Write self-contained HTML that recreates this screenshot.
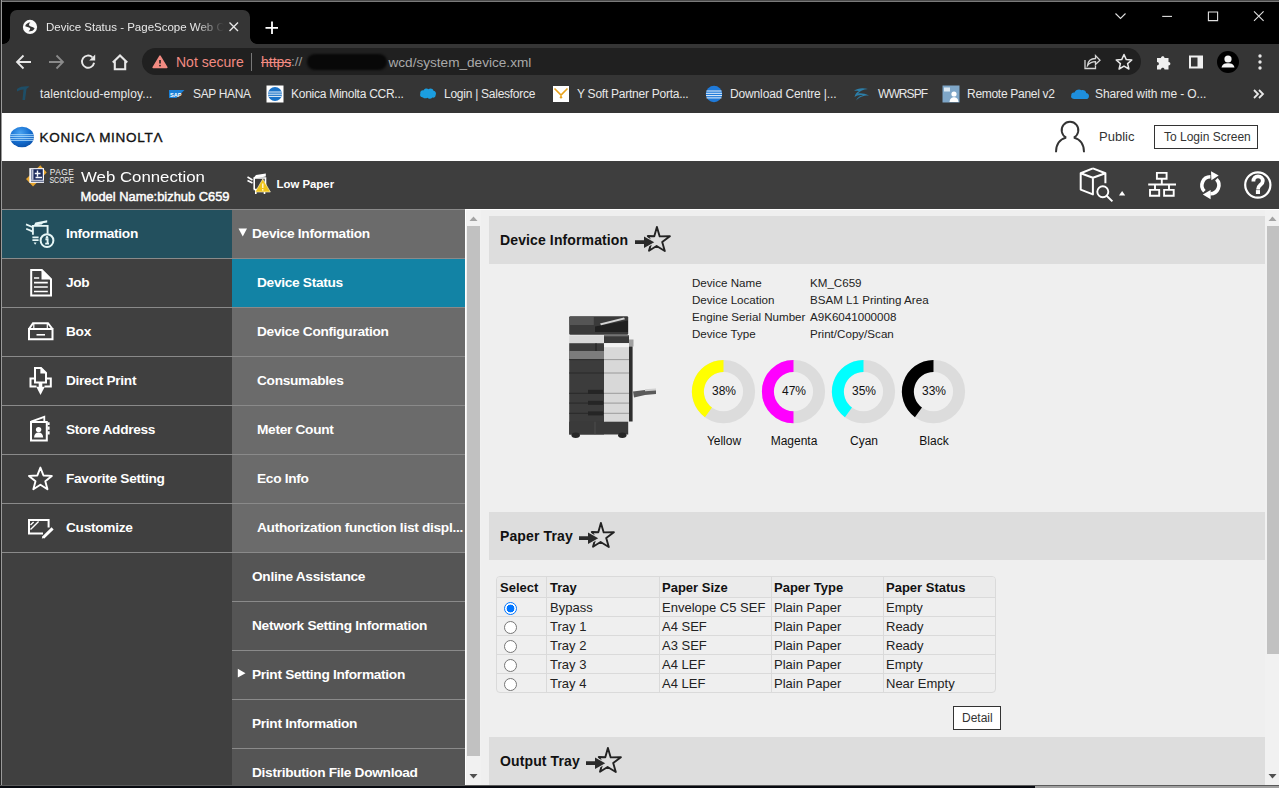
<!DOCTYPE html>
<html><head><meta charset="utf-8">
<style>
*{box-sizing:border-box;margin:0;padding:0}
html,body{width:1279px;height:788px;overflow:hidden;background:#000;font-family:"Liberation Sans",sans-serif;position:relative}
.a{position:absolute}
.t{position:absolute;white-space:nowrap}
/* chrome */
#topline{left:0;top:0;width:1279px;height:2px;background:linear-gradient(#4a4a4a 0 1px,#7a7a7a 1px 2px)}
#leftb{left:1px;top:0;width:1px;height:785px;background:#9a9a9a}
#leftb2{left:0;top:0;width:1px;height:785px;background:#262626}
#tab{left:10px;top:10px;width:240px;height:34px;background:#353535;border-radius:7px 7px 0 0}
#tab:before,#tab:after{content:"";position:absolute;bottom:0;width:7px;height:7px}
#tab:before{left:-7px;background:radial-gradient(circle at 0 0,transparent 6.5px,#353535 7.2px)}
#tab:after{right:-7px;background:radial-gradient(circle at 100% 0,transparent 6.5px,#353535 7.2px)}
#toolbar{left:1px;top:44px;width:1278px;height:69px;background:#353535}
#omni{left:142px;top:48px;width:999px;height:27px;background:#202020;border-radius:14px}
.ct{color:#e8e8e8;font-size:12px}
/* page */
#hdr{left:1px;top:113px;width:1278px;height:48px;background:#fff}
#bar{left:1px;top:161px;width:1278px;height:48px;background:#3e3e3e}
#nav{left:1px;top:209px;width:231px;height:576px;background:#404040}
#sub{left:232px;top:209px;width:233px;height:576px;background:#555}
.ni{position:absolute;left:0;width:231px;height:49px;border-top:1px solid #8a8a8a}
.ni .t{left:65px;top:15.6px;color:#fff;font-size:13.7px;letter-spacing:-0.3px;font-weight:bold}
.si{position:absolute;left:0;width:233px;height:49px;border-top:1px solid #8a8a8a;background:#6b6b6b}
.si .t{left:25px;top:15.6px;color:#fff;font-size:13.7px;letter-spacing:-0.3px;font-weight:bold}
.si.d{background:#555}
.si.d .t{left:20px}
#content{left:466px;top:209px;width:813px;height:576px;background:#efefef;border-top:1px solid #fff}
.sec{position:absolute;left:489px;width:776px;height:48px;background:#dddddd}
.sec .t{left:11px;top:16px;font-size:14px;font-weight:bold;color:#111;letter-spacing:0.12px}
.lbl{font-size:11.6px;color:#222}
.th{font-size:13px;font-weight:bold;color:#111}
.td{font-size:13px;color:#222}
.radio{width:13px;height:13px;border:1px solid #767676;border-radius:50%;background:#fff}
.radio.on{border:1px solid #0075ff;background:radial-gradient(circle,#0075ff 0 3.6px,#fff 4.2px)}
#bottom{left:0;top:785px;width:1279px;height:3px;background:linear-gradient(90deg,#080a10 0 1035px,#a0a0a0 1035px);border-top:1px solid #5a5a5a}
</style></head><body>
<div class="a" id="topline"></div>
<div class="a" id="tab"></div>
<div class="a" id="toolbar"></div>
<div class="a" id="omni"></div>
<div class="t ct" style="left:46px;top:21px;font-size:11.5px;width:180px;overflow:hidden;-webkit-mask-image:linear-gradient(90deg,#000 150px,transparent 178px)">Device Status - PageScope Web Connection</div>
<div class="t" style="left:176px;top:54px;font-size:14px;color:#f28b82">Not secure</div>
<div class="a" style="left:251px;top:53px;width:1px;height:18px;background:#777"></div>
<div class="t" style="left:261px;top:54px;font-size:14px;color:#f28b82;text-decoration:line-through">https</div>
<div class="t" style="left:291px;top:54px;font-size:13.6px;color:#9a9a9a">://</div>
<div class="a" style="left:307px;top:54px;width:80px;height:16px;background:#080808;border-radius:8px;filter:blur(1px)"></div>
<div class="t" style="left:388.5px;top:54.5px;font-size:13.6px;color:#a9a9a9">wcd/system_device.xml</div>

<!-- bookmarks -->
<div class="t ct" style="left:40px;top:87px;letter-spacing:0.13px">talentcloud-employ...</div>
<div class="t ct" style="left:193px;top:87px;letter-spacing:-0.35px">SAP HANA</div>
<div class="t ct" style="left:291px;top:87px;letter-spacing:-0.26px">Konica Minolta CCR...</div>
<div class="t ct" style="left:444px;top:87px;letter-spacing:-0.26px">Login | Salesforce</div>
<div class="t ct" style="left:577px;top:87px;letter-spacing:-0.25px">Y Soft Partner Porta...</div>
<div class="t ct" style="left:730px;top:87px;letter-spacing:-0.14px">Download Centre |...</div>
<div class="t ct" style="left:878px;top:87px;letter-spacing:-0.9px">WWRSPF</div>
<div class="t ct" style="left:967px;top:87px;letter-spacing:-0.29px">Remote Panel v2</div>
<div class="t ct" style="left:1095px;top:87px;letter-spacing:-0.10px">Shared with me - O...</div>

<!-- chrome icons -->
<svg class="a" style="left:18px;top:16px" width="24" height="22">
 <circle cx="12" cy="10.9" r="7.1" fill="#fafafa"/>
 <path d="M7.2 10.2 C7.6 8.2 9.5 6.6 12.4 6.2 C11.4 7.3 10.6 8.4 11.2 9.4 C12.2 10.6 14.6 10.6 16.6 12.2 C16 13.6 15 14.6 13.5 15 C12.6 15.2 11.6 15.3 10.6 15.6 C11.2 14.5 12.4 13.5 12.2 12.5 C11.8 11.2 9 10.8 7.2 10.2 Z" fill="#353535"/>
</svg>
<svg class="a" style="left:227px;top:20px" width="14" height="14"><path d="M2.5 2.5 L11 11 M11 2.5 L2.5 11" stroke="#e8e8e8" stroke-width="1.4"/></svg>
<svg class="a" style="left:264px;top:20px" width="16" height="16"><path d="M8 1.5 V14 M1.5 7.8 H14" stroke="#fff" stroke-width="1.8"/></svg>
<svg class="a" style="left:1110px;top:9px" width="170" height="16" fill="none" stroke="#e0e0e0" stroke-width="1.1">
 <path d="M5.5 4.5 L10.5 9.5 L15.5 4.5"/>
 <path d="M52.2 7.4 H62"/>
 <path d="M98.4 3 H107.6 V11.6 H98.4 Z"/>
 <path d="M144 2.4 L153.6 11.8 M153.6 2.4 L144 11.8"/>
</svg>
<svg class="a" style="left:12px;top:50px" width="130" height="24" fill="none" stroke="#e8e8e8" stroke-width="1.8">
 <path d="M19 12 H5.5 M11.5 5.5 L5 12 L11.5 18.5"/>
 <path d="M37 12 H50.5 M44.5 5.5 L51 12 L44.5 18.5" stroke="#8a8a8a"/>
 <path d="M80.3 7.2 A6.1 6.1 0 1 0 82.1 12.8" stroke-width="1.9"/>
 <path d="M83.2 4.6 V10.6 H77.2 Z" fill="#e8e8e8" stroke="none"/>
 <path d="M100.8 12.6 L108 5.4 L115.2 12.6 M102.8 11 V19.2 H113.2 V11" stroke-width="2.1"/>
</svg>
<svg class="a" style="left:148px;top:52px" width="22" height="20"><path d="M12 4.2 L18.8 15.4 H5.2 Z" fill="#f28b82" stroke="#f28b82" stroke-width="1.6" stroke-linejoin="round"/><path d="M12 8 V11.6" stroke="#202020" stroke-width="1.6"/><circle cx="12" cy="13.6" r="0.9" fill="#202020"/></svg>
<svg class="a" style="left:1080px;top:50px" width="190" height="24" fill="none" stroke="#d6d6d6" stroke-width="1.3">
 <path d="M5 10 V18.5 H15.5 V15.5"/>
 <path d="M7.5 15.5 C8 11 11 8.5 15.5 8.5 V5.5 L20 10.2 L15.5 14.5 V11.6 C12 11.6 9.6 12.8 7.5 15.5 Z"/>
 <path d="M44 4.5 L46.3 9.6 L51.8 10 L47.6 13.6 L48.9 19 L44 16.1 L39.1 19 L40.4 13.6 L36.2 10 L41.7 9.6 Z" stroke="#e8e8e8" stroke-width="1.5" stroke-linejoin="round"/>
</svg>
<svg class="a" style="left:1154px;top:52px" width="20" height="20"><path d="M3 6 H7 C7 3.5 10.5 3.5 10.5 6 H14.5 V10 C17 10 17 13.5 14.5 13.5 V17.5 H10.5 C10.5 15 7 15 7 17.5 H3 V13.5 C5.5 13.5 5.5 10 3 10 Z" fill="#f0f0f0"/></svg>
<svg class="a" style="left:1186px;top:52px" width="20" height="20"><path d="M3 3.5 H17 V16.5 H3 Z" fill="#f0f0f0"/><path d="M5 5.5 H11.5 V14.5 H5 Z" fill="#353535"/></svg>
<svg class="a" style="left:1216px;top:50px" width="24" height="24"><circle cx="12" cy="12" r="11" fill="#000"/><circle cx="12" cy="9" r="3.6" fill="#f4f4f4"/><path d="M5.5 17.5 C6.5 13.8 9 13.3 12 13.3 C15 13.3 17.5 13.8 18.5 17.5 Z" fill="#f4f4f4"/></svg>
<svg class="a" style="left:1254px;top:52px" width="12" height="20"><circle cx="6" cy="4" r="1.7" fill="#e8e8e8"/><circle cx="6" cy="10" r="1.7" fill="#e8e8e8"/><circle cx="6" cy="16" r="1.7" fill="#e8e8e8"/></svg>
<!-- bookmark icons -->
<svg class="a" style="left:14px;top:84px" width="20" height="18"><path d="M3 5 C6 2.5 11 2 15.5 2.5 L12.5 5 L11 16 H8.5 L9.5 5.5 C7.5 5.5 5 6.2 3 7.5 Z" fill="#1e4e67"/></svg>
<svg class="a" style="left:168.5px;top:89.5px" width="16" height="9"><path d="M0 0 H15.5 L7.5 8 H0 Z" fill="#1a7fd6"/><text x="1" y="6.6" font-size="5.6" font-weight="bold" fill="#fff" font-family="Liberation Sans">SAP</text></svg>
<svg class="a" style="left:266px;top:85px" width="18" height="18"><rect x="0.5" y="0.5" width="17" height="17" fill="#fff"/><circle cx="9" cy="9" r="7" fill="#1a73c8"/><path d="M2.5 7 H15.5 M2 9.2 H16 M2.5 11.4 H15.5" stroke="#fff" stroke-width="0.9"/></svg>
<svg class="a" style="left:419px;top:86px" width="18" height="14"><path d="M4 11.5 C1.5 11.5 0.5 9.5 1.3 7.8 C0.8 5.8 2.5 4 4.5 4.4 C5.5 2.5 8 2 9.5 3.3 C11 2 14 2.5 14.5 4.7 C16.8 5 17.6 7.5 16.6 9.2 C16.6 11 15 12 13.5 11.5 C12 13 9.5 13 8.5 11.8 C7 12.6 5 12.6 4 11.5 Z" fill="#1b9ee0"/></svg>
<svg class="a" style="left:552px;top:85px" width="18" height="18"><rect x="1" y="1" width="16" height="16" fill="#fff"/><path d="M2.5 3.5 L9 10 L15.5 3.5" stroke="#e8a21c" stroke-width="1.6" fill="none"/><circle cx="9" cy="12.3" r="1.2" fill="#e8a21c"/></svg>
<svg class="a" style="left:705px;top:85px" width="18" height="18"><circle cx="9" cy="9" r="8.2" fill="#1f7ad9"/><path d="M1.5 6 H16.5 M1 8.3 H17 M1 10.6 H17 M1.5 12.9 H16.5" stroke="#fff" stroke-width="0.9"/></svg>
<svg class="a" style="left:852px;top:85px" width="20" height="18"><path d="M2 6 C5 3 11 2.5 16 4 C11 4.5 8 6 6 8.5 C9 8 13 8.5 17 10.5 C13 10 7 12 4 15.5 C6 11.5 9 10.5 11 10.2 C8 9.5 4.5 10.5 2.5 12 C3 9 5 7 7 6.2 C5 5.5 3.5 5.8 2 6 Z" fill="#2c7ea8"/></svg>
<svg class="a" style="left:942px;top:85px" width="18" height="18"><rect x="0.5" y="0.5" width="17" height="17" fill="#7ea6c8"/><rect x="2" y="2.5" width="6" height="4" fill="#dce9f3"/><circle cx="12" cy="9" r="2.6" fill="#fff"/><path d="M7.5 17 C8 13 10 12.2 12 12.2 C14 12.2 16 13 16.5 17 Z" fill="#fff"/></svg>
<svg class="a" style="left:1070px;top:87px" width="20" height="13"><path d="M4 12 C1.5 12 0.5 10 1.3 8.3 C1 6.5 2.8 5.2 4.5 5.6 C5.5 2.8 9 1.5 11.5 3.2 C13.5 2.5 16 3.8 16.2 6 C18.5 6.2 19.5 8.5 18.8 10.2 C18.3 11.5 17.3 12 16 12 Z" fill="#1e8fdd"/></svg>
<svg class="a" style="left:1252px;top:88px" width="14" height="12"><path d="M2 2 L6 6 L2 10 M7 2 L11 6 L7 10" stroke="#e8e8e8" stroke-width="1.8" fill="none"/></svg>

<!-- page header -->
<div class="a" id="hdr"></div>
<div class="a" id="bar"></div>
<svg class="a" style="left:8px;top:125px" width="30" height="24">
 <defs><radialGradient id="kmg" cx="0.42" cy="0.3" r="0.75"><stop offset="0" stop-color="#4aa3f0"/><stop offset="0.55" stop-color="#1570d2"/><stop offset="1" stop-color="#0a4fa8"/></radialGradient></defs>
 <ellipse cx="14" cy="12" rx="11.9" ry="10.3" fill="url(#kmg)"/>
 <path d="M2.3 9.7 H25.7 M2.1 11.6 H25.9 M2.2 13.6 H25.8 M2.8 15.4 H25.2" stroke="#b8e2ff" stroke-width="0.85"/>
</svg>
<div class="t" style="left:39.5px;top:129.8px;font-size:13.5px;letter-spacing:0.7px;color:#111;-webkit-text-stroke:0.35px #111">KONIC&#923; MINOLT&#923;</div>
<svg class="a" style="left:1050px;top:116px" width="40" height="40" fill="none" stroke="#333" stroke-width="1.9">
 <path d="M16.2 21.6 A8.35 8.35 0 1 1 23.8 21.6"/>
 <path d="M16.2 21.6 C10 23.2 6 28.5 6 36.2 M23.8 21.6 C30 23.2 34 28.5 34 36.2"/>
</svg>
<svg class="a" style="left:22px;top:162px" width="56" height="30">
 <path d="M18.3 3.2 L24.7 10.4 L11 24.5 L4 17 Z" fill="#e6a52e"/>
 <rect x="7.3" y="6.1" width="14.7" height="14.8" fill="#f4f6fb"/>
 <rect x="9.5" y="7.2" width="11.3" height="10.6" fill="#1b2a5c"/>
 <path d="M10.8 7.2 V17.8" stroke="#f4f6fb" stroke-width="1.1"/>
 <path d="M15.5 8.5 V14.5 M12.8 11.5 H18.5 M13.5 15.5 H20" stroke="#f4f6fb" stroke-width="1.4"/>
 <path d="M9 19.2 H21.8" stroke="#1b2a5c" stroke-width="0.9"/>
 <text x="27.8" y="12.9" font-family="Liberation Sans" font-size="8.4" textLength="24" lengthAdjust="spacing" fill="#f0f0f0">PAGE</text>
 <text x="27.4" y="20.6" font-family="Liberation Sans" font-size="8.4" textLength="24.6" lengthAdjust="spacingAndGlyphs" fill="#f0f0f0">SCOPE</text>
</svg>
<svg class="a" style="left:240px;top:168px" width="36" height="30">
 <path d="M7.5 9 L12.5 12 M7.5 12.5 L12.5 15" stroke="#fff" stroke-width="1.6"/>
 <path d="M14.2 21 V10 H25.5 V21" stroke="#fff" stroke-width="1.6" fill="none"/>
 <path d="M14 9.5 L16 7 L25.8 5.5 V8.5 L14 10.5 Z" fill="#fff"/>
 <path d="M13.6 21.5 H26 M15.8 21.5 V26 M24.5 21.5 V26" stroke="#fff" stroke-width="1.6"/>
 <path d="M22.8 11 L30.4 24 H15.2 Z" fill="#f0c419" stroke="#fff8d8" stroke-width="0.6"/>
 <path d="M22.8 15.5 V20" stroke="#fffbe6" stroke-width="1.3"/><circle cx="22.8" cy="21.9" r="0.8" fill="#fffbe6"/>
</svg>
<svg class="a" style="left:1070px;top:160px" width="209" height="48" fill="none" stroke="#fff" stroke-width="1.9" stroke-linejoin="round">
 <path d="M22.9 8.4 L35.4 13.3 V23.2 M22.9 8.4 L10.7 13.3 V29.6 L22.9 34.4 V17.8 M10.7 13.3 L22.9 17.8 L35.4 13.3" stroke-width="2"/>
 <circle cx="32.8" cy="31.7" r="5.6" stroke="#3e3e3e" stroke-width="4" fill="#3e3e3e"/>
 <circle cx="32.8" cy="31.7" r="5.5" stroke-width="1.9"/>
 <path d="M36.6 35.7 L42.4 41.4" stroke-width="2"/>
 <path d="M49 35.6 H55.2 L52.1 31 Z" fill="#fff" stroke="none"/>
 <path d="M86.9 12.9 H96.6 V18.7 H86.9 Z M91.8 18.7 V24.5 M78.2 24.5 H106 M85 24.5 V29.9 M99 24.5 V29.9 M80 29.9 H89.2 V35.7 H80 Z M94.1 29.9 H103.7 V35.7 H94.1 Z" stroke-width="1.9" stroke-linejoin="miter"/>
 <path d="M140.4 16.8 A8.5 8.5 0 0 0 134.4 31.3" stroke-width="3.6" stroke-linejoin="miter"/>
 <path d="M146.4 19.3 A8.5 8.5 0 0 1 140.4 33.8" stroke-width="3.6"/>
 <path d="M141 11.3 L148.7 15.5 L141.4 20.2 Z" fill="#fff" stroke="none"/>
 <path d="M132.8 34.6 L140.6 29.9 L140.6 39.2 Z" fill="#fff" stroke="none"/>
 <circle cx="187.8" cy="25" r="12.6" stroke-width="2.2"/>
 <path d="M183.4 21.5 C183.4 18 185.5 16.4 188 16.4 C191 16.4 192.8 18.4 192.8 21 C192.8 23.5 191 24.5 189.8 25.5 C188.6 26.4 188 27 188 29.6" stroke-width="3.8" stroke-linejoin="miter" stroke-linecap="butt"/>
 <rect x="185.9" y="30.1" width="4.1" height="3.9" fill="#fff" stroke="none"/>
</svg>

<div class="t" style="left:1099px;top:129px;font-size:13px;color:#333">Public</div>
<div class="a" style="left:1154px;top:125px;width:104px;height:24px;border:1px solid #333"></div>
<div class="t" style="left:1164px;top:130px;font-size:12px;color:#333">To Login Screen</div>
<div class="t" style="left:80.5px;top:168.4px;font-size:15px;color:#fff;transform:scaleX(1.12);transform-origin:0 0">Web Connection</div>
<div class="t" style="left:80.5px;top:189.3px;font-size:12.9px;color:#fff;-webkit-text-stroke:0.45px #fff">Model Name:bizhub C659</div>
<div class="t" style="left:276.5px;top:177.5px;font-size:11.4px;font-weight:bold;color:#fff">Low Paper</div>

<!-- nav -->
<div class="a" id="nav">
 <div class="ni" style="top:0;background:#23505e"><div class="t">Information</div></div>
 <div class="ni" style="top:49px"><div class="t">Job</div></div>
 <div class="ni" style="top:98px"><div class="t">Box</div></div>
 <div class="ni" style="top:147px"><div class="t">Direct Print</div></div>
 <div class="ni" style="top:196px"><div class="t">Store Address</div></div>
 <div class="ni" style="top:245px"><div class="t">Favorite Setting</div></div>
 <div class="ni" style="top:294px"><div class="t">Customize</div></div>
 <div class="ni" style="top:343px"></div>
</div>
<div class="a" id="sub">
 <div class="si" style="top:0"><div class="t" style="left:20px">Device Information</div></div>
 <div class="si" style="top:49px;background:#1283a5"><div class="t">Device Status</div></div>
 <div class="si" style="top:98px"><div class="t">Device Configuration</div></div>
 <div class="si" style="top:147px"><div class="t">Consumables</div></div>
 <div class="si" style="top:196px"><div class="t">Meter Count</div></div>
 <div class="si" style="top:245px"><div class="t">Eco Info</div></div>
 <div class="si" style="top:294px"><div class="t">Authorization function list displ...</div></div>
 <div class="si d" style="top:343px"><div class="t">Online Assistance</div></div>
 <div class="si d" style="top:392px"><div class="t">Network Setting Information</div></div>
 <div class="si d" style="top:441px"><div class="t">Print Setting Information</div></div>
 <div class="si d" style="top:490px"><div class="t">Print Information</div></div>
 <div class="si d" style="top:539px"><div class="t">Distribution File Download</div></div>
</div>


<!-- nav icons -->
<svg class="a" style="left:20px;top:214px" width="40" height="40" fill="none" stroke="#e6f6f6" stroke-width="1.9">
 <path d="M6 10.4 L12.3 13 M6.2 14.8 L12.3 17.4" stroke-width="1.7"/>
 <path d="M12.9 20.8 V11.9 H27.6 V19.8"/>
 <path d="M13.8 11.4 L15.4 8.4 L27.2 6.2 V8.6 L23 9.2 L21.8 10.6 Z" fill="#e6f6f6" stroke="none"/>
 <path d="M12.4 23.4 H18.6 M12.4 26.2 H18.6" stroke-width="1.7"/>
 <path d="M13.6 28.5 H16.6 L15.1 30.8 Z" fill="#e6f6f6" stroke="none"/>
 <circle cx="27" cy="26.6" r="6.4" stroke-width="2"/>
 <circle cx="27" cy="23.2" r="1.2" fill="#e6f6f6" stroke="none"/>
 <path d="M25.4 25.3 H27.6 V29.4 M25.2 29.6 H29" stroke-width="1.9"/>
</svg>
<svg class="a" style="left:20px;top:263px" width="40" height="40" fill="none" stroke="#fff" stroke-width="2">
 <path d="M11.2 7 H21.8 L31 16.2 V32.5 H11.2 Z"/>
 <path d="M21.5 6.5 V16.5 H31.5 Z" fill="#fff" stroke="none"/>
 <path d="M14 15 H19.2 M14 19.6 H27.8 M14 24 H27.8 M14 28.5 H27.8" stroke-width="1.7"/>
</svg>
<svg class="a" style="left:20px;top:312px" width="40" height="40" fill="none" stroke="#fff" stroke-width="2">
 <path d="M9 17 H32.5 V27.2 H9 Z"/>
 <path d="M9 17 L13 11.2 H28 L32.5 17"/>
 <path d="M13.8 11.5 V16 M27.3 11.5 V16" stroke-width="1.2"/>
 <path d="M16.5 22.8 H25" stroke-width="1.6"/>
</svg>
<svg class="a" style="left:20px;top:361px" width="40" height="40" fill="none" stroke="#fff" stroke-width="2">
 <path d="M15 21.5 V7 H21 L26 12 V21.5 Z"/>
 <path d="M20.4 6 V12.6 H27 Z" fill="#fff" stroke="none"/>
 <path d="M15 17.5 H10.5 V25.5 H16.5 M24.5 25.5 H30.8 V17.5 H25.8"/>
 <path d="M16.3 25.8 H24.8 L20.5 34 Z" fill="#fff" stroke="none"/>
 <path d="M20.5 22 V27" stroke-width="3.6"/>
</svg>
<svg class="a" style="left:20px;top:410px" width="40" height="40" fill="none" stroke="#fff" stroke-width="2">
 <path d="M11 12 H26.8 V30.6 H11 Z"/>
 <path d="M11 11.6 L24.3 6.8 V11.6" stroke-width="1.8"/>
 <path d="M27.5 12.3 H29.6 V15 H27.5 Z M27.5 16.5 H29.6 V19.8 H27.5 Z M27.5 21.3 H29.6 V24.6 H27.5 Z" fill="#fff" stroke="none"/>
 <circle cx="18.6" cy="19.6" r="2.7" fill="#fff" stroke="none"/>
 <path d="M14 27.6 Q14.5 22.5 18.6 22.5 Q22.7 22.5 23.2 27.6 Z" fill="#fff" stroke="none"/>
</svg>
<svg class="a" style="left:20px;top:459px" width="40" height="40" fill="none" stroke="#fff" stroke-width="1.9" stroke-linejoin="round">
 <path d="M20.40 8.60 L23.43 16.43 L31.81 16.89 L25.31 22.19 L27.45 30.31 L20.40 25.76 L13.35 30.31 L15.49 22.19 L8.99 16.89 L17.37 16.43 Z"/>
</svg>
<svg class="a" style="left:20px;top:508px" width="40" height="40" fill="none" stroke="#fff" stroke-width="2">
 <path d="M28.6 19.5 V12 H9 V25.6 H23"/>
 <path d="M10.5 17 L13.6 14 M10.5 21.6 L18.6 13.6" stroke-width="1.4"/>
 <path d="M23.3 29.5 L32.6 20.4" stroke-width="3" stroke-linecap="butt"/>
 <path d="M21.8 30.6 L22.6 28 L24.8 30.1 Z" fill="#fff" stroke="none"/>
</svg>
<!-- sub nav triangles -->
<svg class="a" style="left:236.8px;top:227px" width="12" height="12"><path d="M1.5 1.5 H10 L5.75 9.5 Z" fill="#fff"/></svg>
<svg class="a" style="left:236px;top:667px" width="12" height="12"><path d="M1.8 1.8 V10.5 L9.5 6.15 Z" fill="#fff"/></svg>

<!-- content -->
<div class="a" id="content"></div>
<div class="sec" style="top:216px"><div class="t">Device Information</div></div>
<div class="sec" style="top:512px"><div class="t">Paper Tray</div></div>
<div class="sec" style="top:737px"><div class="t">Output Tray</div></div>


<!-- device info -->
<div class="t lbl" style="left:692px;top:276px">Device Name</div>
<div class="t lbl" style="left:692px;top:293px">Device Location</div>
<div class="t lbl" style="left:692px;top:310px">Engine Serial Number</div>
<div class="t lbl" style="left:692px;top:327px">Device Type</div>
<div class="t lbl" style="left:810px;top:276px">KM_C659</div>
<div class="t lbl" style="left:810px;top:293px">BSAM L1 Printing Area</div>
<div class="t lbl" style="left:810px;top:310px">A9K6041000008</div>
<div class="t lbl" style="left:810px;top:327px">Print/Copy/Scan</div>
<svg class="a" style="left:680px;top:350px" width="300" height="110">
 <g fill="none" stroke-width="12">
  <circle cx="43.5" cy="41.6" r="25.6" stroke="#dcdcdc"/>
  <circle cx="113.5" cy="41.6" r="25.6" stroke="#dcdcdc"/>
  <circle cx="183.5" cy="41.6" r="25.6" stroke="#dcdcdc"/>
  <circle cx="253.5" cy="41.6" r="25.6" stroke="#dcdcdc"/>
  <path d="M43.5 16.00 A25.6 25.6 0 0 0 28.45 62.31" stroke="#ffff00"/>
  <path d="M113.5 16.00 A25.6 25.6 0 0 0 113.50 67.20" stroke="#ff00ff"/>
  <path d="M183.5 16.00 A25.6 25.6 0 0 0 168.45 62.31" stroke="#00ffff"/>
  <path d="M253.5 16.00 A25.6 25.6 0 0 0 238.45 62.31" stroke="#000000"/>
 </g>
</svg>
<div class="t" style="left:701px;top:384px;width:46px;text-align:center;font-size:12px;color:#111">38%</div>
<div class="t" style="left:771px;top:384px;width:46px;text-align:center;font-size:12px;color:#111">47%</div>
<div class="t" style="left:841px;top:384px;width:46px;text-align:center;font-size:12px;color:#111">35%</div>
<div class="t" style="left:911px;top:384px;width:46px;text-align:center;font-size:12px;color:#111">33%</div>
<div class="t" style="left:694px;top:434px;width:60px;text-align:center;font-size:12px;color:#111">Yellow</div>
<div class="t" style="left:764px;top:434px;width:60px;text-align:center;font-size:12px;color:#111">Magenta</div>
<div class="t" style="left:834px;top:434px;width:60px;text-align:center;font-size:12px;color:#111">Cyan</div>
<div class="t" style="left:904px;top:434px;width:60px;text-align:center;font-size:12px;color:#111">Black</div>

<!-- paper tray table -->
<div class="a" id="ptab" style="left:496px;top:576px;width:500px;height:117px;border:1px solid #dadada;border-radius:4px;overflow:hidden">
 <div class="a" style="left:0;top:0;width:498px;height:20px;background:#ebebeb"></div>
 <div class="a" style="left:0;top:20px;width:498px;height:1px;background:#dadada"></div>
 <div class="a" style="left:0;top:39px;width:498px;height:1px;background:#dadada"></div>
 <div class="a" style="left:0;top:58px;width:498px;height:1px;background:#dadada"></div>
 <div class="a" style="left:0;top:77px;width:498px;height:1px;background:#dadada"></div>
 <div class="a" style="left:0;top:96px;width:498px;height:1px;background:#dadada"></div>
 <div class="a" style="left:49px;top:0;width:1px;height:117px;background:#dadada"></div>
 <div class="a" style="left:162px;top:0;width:1px;height:117px;background:#dadada"></div>
 <div class="a" style="left:274px;top:0;width:1px;height:117px;background:#dadada"></div>
 <div class="a" style="left:386px;top:0;width:1px;height:117px;background:#dadada"></div>
</div>
<div class="t th" style="left:500px;top:580px">Select</div>
<div class="t th" style="left:550px;top:580px">Tray</div>
<div class="t th" style="left:662px;top:580px">Paper Size</div>
<div class="t th" style="left:774px;top:580px">Paper Type</div>
<div class="t th" style="left:886px;top:580px">Paper Status</div>
<div class="a radio on" style="left:504px;top:602px"></div>
<div class="t td" style="left:550px;top:600px">Bypass</div>
<div class="t td" style="left:662px;top:600px">Envelope C5 SEF</div>
<div class="t td" style="left:774px;top:600px">Plain Paper</div>
<div class="t td" style="left:886px;top:600px">Empty</div>
<div class="a radio" style="left:504px;top:621px"></div>
<div class="t td" style="left:550px;top:619px">Tray 1</div>
<div class="t td" style="left:662px;top:619px">A4 SEF</div>
<div class="t td" style="left:774px;top:619px">Plain Paper</div>
<div class="t td" style="left:886px;top:619px">Ready</div>
<div class="a radio" style="left:504px;top:640px"></div>
<div class="t td" style="left:550px;top:638px">Tray 2</div>
<div class="t td" style="left:662px;top:638px">A3 SEF</div>
<div class="t td" style="left:774px;top:638px">Plain Paper</div>
<div class="t td" style="left:886px;top:638px">Ready</div>
<div class="a radio" style="left:504px;top:659px"></div>
<div class="t td" style="left:550px;top:657px">Tray 3</div>
<div class="t td" style="left:662px;top:657px">A4 LEF</div>
<div class="t td" style="left:774px;top:657px">Plain Paper</div>
<div class="t td" style="left:886px;top:657px">Empty</div>
<div class="a radio" style="left:504px;top:678px"></div>
<div class="t td" style="left:550px;top:676px">Tray 4</div>
<div class="t td" style="left:662px;top:676px">A4 LEF</div>
<div class="t td" style="left:774px;top:676px">Plain Paper</div>
<div class="t td" style="left:886px;top:676px">Near Empty</div>

<div class="a" style="left:953px;top:706px;width:48px;height:24px;border:1px solid #333;background:#fff"></div>
<div class="t" style="left:962px;top:711px;font-size:12px;color:#333">Detail</div>

<svg class="a" style="left:630px;top:220px" width="46" height="36">
 <path d="M26.9 7 L29.7 16.4 L39.9 16.3 L32.2 22 L34.8 31 L26.6 26 L19 30.7 L21.4 22.3 L17.8 16 L24.3 16.2 Z" fill="none" stroke="#222" stroke-width="1.9" stroke-linejoin="round"/>
 <path d="M5 20.2 H14 V16.4 L24.2 22.2 L14 28 V24 H5 Z" fill="#2a2a2a" stroke="#dddddd" stroke-width="2" paint-order="stroke"/>
</svg>
<svg class="a" style="left:574px;top:516px" width="46" height="36">
 <path d="M26.9 7 L29.7 16.4 L39.9 16.3 L32.2 22 L34.8 31 L26.6 26 L19 30.7 L21.4 22.3 L17.8 16 L24.3 16.2 Z" fill="none" stroke="#222" stroke-width="1.9" stroke-linejoin="round"/>
 <path d="M5 20.2 H14 V16.4 L24.2 22.2 L14 28 V24 H5 Z" fill="#2a2a2a" stroke="#dddddd" stroke-width="2" paint-order="stroke"/>
</svg>
<svg class="a" style="left:581px;top:741px" width="46" height="36">
 <path d="M26.9 7 L29.7 16.4 L39.9 16.3 L32.2 22 L34.8 31 L26.6 26 L19 30.7 L21.4 22.3 L17.8 16 L24.3 16.2 Z" fill="none" stroke="#222" stroke-width="1.9" stroke-linejoin="round"/>
 <path d="M5 20.2 H14 V16.4 L24.2 22.2 L14 28 V24 H5 Z" fill="#2a2a2a" stroke="#dddddd" stroke-width="2" paint-order="stroke"/>
</svg>
<svg class="a" style="left:560px;top:308px" width="104" height="136" viewBox="560 308 104 136">
 <rect x="569.2" y="316.2" width="59" height="18.5" rx="1.2" fill="#3a3a3a"/>
 <rect x="569.8" y="317" width="24" height="8" fill="#555"/>
 <path d="M595 326.5 L628 320.5 V332 H595 Z" fill="#202020"/>
 <path d="M600 323.6 L624 317.6 L625 319.2 L601 325.2 Z" fill="#d4d4d4"/>
 <rect x="569.2" y="335.4" width="34.6" height="7.8" fill="#d9d9d9"/>
 <rect x="604" y="335.4" width="25" height="7.8" fill="#3a3a3a"/>
 <rect x="604" y="335.4" width="25" height="1" fill="#6a6a6a"/>
 <rect x="569.2" y="343.2" width="34.8" height="91.3" fill="#3c3c3c"/>
 <rect x="569.2" y="351" width="34.8" height="8.5" fill="#7c7c7c"/>
 <path d="M569.2 359.6 H604 M569.2 373 H604 M569.2 393.3 H604 M569.2 403.1 H604 M569.2 413.3 H604" stroke="#262626" stroke-width="0.9"/>
 <path d="M596 343.2 V351" stroke="#1e1e1e" stroke-width="1"/>
 <rect x="588" y="389.8" width="15" height="4" fill="#252525"/>
 <rect x="588" y="400.8" width="15" height="4" fill="#252525"/>
 <rect x="588" y="411.4" width="15" height="4" fill="#252525"/>
 <rect x="604" y="343.2" width="25" height="78.5" rx="1.2" fill="#d8d8d8"/>
 <rect x="604" y="343.2" width="25" height="4" fill="#f2f2f2"/>
 <path d="M604 359.6 H629 M604 373 H629 M604 393.3 H629 M604 403.1 H629 M604 413.3 H629" stroke="#8a8a8a" stroke-width="0.8"/>
 <rect x="569.2" y="421.7" width="59" height="12.8" fill="#3a3a3a"/>
 <path d="M595 421.7 V434.5" stroke="#5a5a5a" stroke-width="0.6"/>
 <rect x="629" y="339.5" width="4.5" height="7" fill="#a0a0a0"/>
 <rect x="629" y="346.5" width="3.6" height="75" fill="#2e2e2e"/>
 <path d="M633 391.5 L645 390 L656 389.5 V394 L645 395 L634 397.5 Z" fill="#5a5a5a"/>
 <path d="M645 389.2 L656 388.6 V390.6 L645 391.2 Z" fill="#cfcfcf"/>
 <ellipse cx="575.7" cy="435.3" rx="4.2" ry="2.7" fill="#262626"/>
 <ellipse cx="622.3" cy="435.3" rx="4.2" ry="2.7" fill="#262626"/>
</svg>
<!-- scrollbars -->
<div class="a" style="left:465px;top:209px;width:1px;height:576px;background:#fff"></div>
<div class="a" style="left:466px;top:210px;width:15px;height:575px;background:#f1f1f1"></div>
<div class="a" style="left:467px;top:226px;width:13px;height:530px;background:#c1c1c1"></div>
<svg class="a" style="left:466px;top:212px" width="15" height="12"><path d="M3.5 9 L7.5 4.6 L11.5 9 Z" fill="#a3a3a3"/></svg>
<svg class="a" style="left:466px;top:771px" width="15" height="12"><path d="M3.5 3 L7.5 7.4 L11.5 3 Z" fill="#505050"/></svg>
<div class="a" style="left:1265px;top:210px;width:14px;height:575px;background:#f1f1f1"></div>
<div class="a" style="left:1267px;top:226px;width:12px;height:428px;background:#c1c1c1"></div>
<svg class="a" style="left:1265px;top:212px" width="15" height="12"><path d="M3.5 9 L7.5 4.6 L11.5 9 Z" fill="#a3a3a3"/></svg>
<svg class="a" style="left:1265px;top:771px" width="15" height="12"><path d="M3.5 3 L7.5 7.4 L11.5 3 Z" fill="#505050"/></svg>
<div class="a" id="bottom"></div>
<div class="a" id="leftb"></div><div class="a" id="leftb2"></div>
</body></html>
